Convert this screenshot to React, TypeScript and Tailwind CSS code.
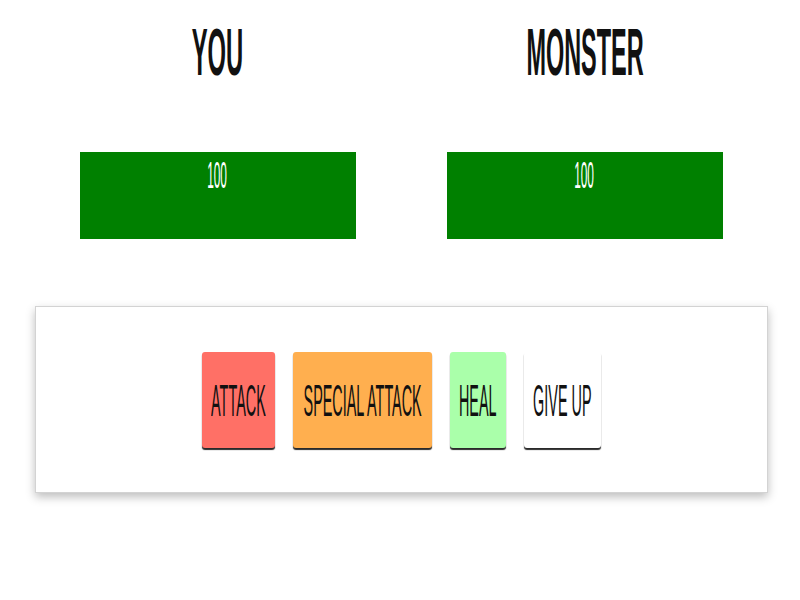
const Squeeze = ({ children, className }: { children: React.ReactNode; className?: string }) => (
  <span className={"inline-block whitespace-nowrap origin-center " + (className ?? "")}>{children}</span>
);

const HealthBar = ({ value }: { value: number }) => (
  <div className="w-[276px] h-[87px] bg-[#008000] flex justify-center pt-[6px]">
    <Squeeze className="text-[36px] leading-none text-white scale-x-[0.33]">{value}</Squeeze>
  </div>
);

const buttons = [
  { label: "ATTACK", cls: "w-[73px] bg-[#ff7066]" },
  { label: "SPECIAL ATTACK", cls: "w-[139px] bg-[#ffaf4f]" },
  { label: "HEAL", cls: "w-[56px] bg-[#aaffaa]" },
  { label: "GIVE UP", cls: "w-[77px] bg-white" },
];

export default function App() {
  return (
    <div className="w-[800px] h-[600px] bg-white font-['Liberation_Sans',Arial,sans-serif] text-[#111]">
      <div className="w-[734px] ml-[34px] grid grid-cols-2 pt-[19px]">
        <div className="flex flex-col items-center">
          <Squeeze className="text-[66px] font-bold leading-none scale-x-[0.36]">YOU</Squeeze>
          <div className="mt-[67px]">
            <HealthBar value={100} />
          </div>
        </div>
        <div className="flex flex-col items-center">
          <Squeeze className="text-[66px] font-bold leading-none scale-x-[0.355]">MONSTER</Squeeze>
          <div className="mt-[67px]">
            <HealthBar value={100} />
          </div>
        </div>
      </div>

      <div className="w-[733px] h-[187px] ml-[35px] mt-[67px] border border-[#d3d3d3] bg-white shadow-[0_4px_9px_rgba(0,0,0,0.26)] flex justify-center gap-[18px] pt-[45px]">
        {buttons.map((b) => (
          <button
            key={b.label}
            className={
              "h-[96px] rounded-[3px] flex items-center justify-center shadow-[0_2px_1px_#2a2a2a] " + b.cls
            }
          >
            <Squeeze className="text-[45px] leading-none scale-x-[0.32]">{b.label}</Squeeze>
          </button>
        ))}
      </div>
    </div>
  );
}
